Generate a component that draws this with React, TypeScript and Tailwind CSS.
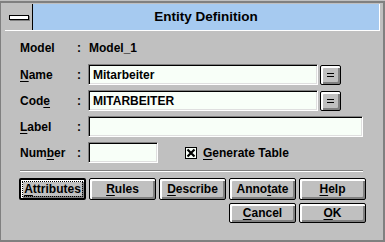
import React from "react";

const btnBase =
  "flex items-center justify-center rounded-[2px] bg-[#c0c0c0] text-[12px] font-bold text-black shadow-[inset_1px_1px_0_#fff,inset_2px_2px_0_#fff,inset_-1px_-1px_0_#808080,inset_-2px_-2px_0_#808080]";

const fieldBox =
  "h-[21px] border border-t-[#808080] border-l-[#808080] border-b-white border-r-white bg-[#f8fff8] shadow-[inset_1px_1px_0_#000,inset_-1px_-1px_0_#dfdfdf] flex items-center pl-[4px] text-[12px] font-bold";

function PushButton({
  label,
  hot,
  isDefault,
  h = "h-[22px]",
}: {
  label: string;
  hot: number;
  isDefault?: boolean;
  h?: string;
}) {
  const before = label.slice(0, hot);
  const key = label[hot];
  const after = label.slice(hot + 1);
  const text = (
    <span>
      {before}
      <u className="underline-offset-[2px]">{key}</u>
      {after}
    </span>
  );
  return (
    <div
      className={`${btnBase} ${h} w-[67px] ${isDefault ? "border-2 border-black" : "border border-black"}`}
    >
      {isDefault ? (
        <span className="border border-dotted border-black px-px leading-[14px]">{text}</span>
      ) : (
        text
      )}
    </div>
  );
}

function EqButton() {
  return (
    <div className={`${btnBase} h-[20px] w-[21px] border border-black`}>
      <svg width="7" height="4" viewBox="0 0 7 4">
        <rect x="0" y="0" width="7" height="1" fill="#000" />
        <rect x="0" y="3" width="7" height="1" fill="#000" />
      </svg>
    </div>
  );
}

function Label({ text, hot }: { text: string; hot?: number }) {
  return (
    <>
      <div className="w-[57px] text-[12px] font-bold">
        {hot === undefined ? (
          text
        ) : (
          <>
            {text.slice(0, hot)}
            <u className="underline-offset-[2px]">{text[hot]}</u>
            {text.slice(hot + 1)}
          </>
        )}
      </div>
      <div className="w-[11px] text-[12px] font-bold">:</div>
    </>
  );
}

export default function App() {
  return (
    <div className="h-[242px] w-[385px] overflow-hidden bg-[#c0c0c0] pt-px font-['Liberation_Sans',Arial,sans-serif] text-black">
      <div className="flex h-[241px] flex-col border-t-2 border-r-2 border-b-2 border-l border-[#808080] pt-px pl-[4px] pr-[3px]">
        {/* title bar */}
        <div className="flex h-[27px] border-b border-r border-white">
          <div className="flex w-[28px] items-center justify-center border-r border-black bg-[#c0c0c0]">
            <div className="h-[5px] w-[20px] border border-black bg-white shadow-[1px_1px_0_#808080]" />
          </div>
          <div className="flex flex-1 items-center justify-center bg-[#a6caf0] text-[13.5px] font-bold">
            Entity Definition
          </div>
        </div>

        <div className="flex flex-col pl-[15px]">
          <div className="mt-[9px] flex h-[16px] items-center">
            <Label text="Model" />
            <div className="pl-px text-[12px] font-bold">Model_1</div>
          </div>

          <div className="mt-[8px] flex h-[21px] items-center">
            <Label text="Name" hot={0} />
            <div className={`${fieldBox} w-[230px]`}>Mitarbeiter</div>
            <div className="ml-[2px]">
              <EqButton />
            </div>
          </div>

          <div className="mt-[5px] flex h-[21px] items-center">
            <Label text="Code" hot={3} />
            <div className={`${fieldBox} w-[230px]`}>MITARBEITER</div>
            <div className="ml-[2px]">
              <EqButton />
            </div>
          </div>

          <div className="mt-[5px] flex h-[21px] items-center">
            <Label text="Label" hot={0} />
            <div className={`${fieldBox} w-[275px]`} />
          </div>

          <div className="mt-[5px] flex h-[21px] items-center">
            <Label text="Number" hot={3} />
            <div className={`${fieldBox} w-[70px]`} />
            <div className="ml-[27px] flex items-center">
              <svg width="12" height="12" viewBox="0 0 12 12">
                <rect x="0.5" y="0.5" width="11" height="11" fill="#f8fff8" stroke="#000" />
                <path d="M2.5 2.5 L9.5 9.5 M9.5 2.5 L2.5 9.5" stroke="#000" strokeWidth="2.2" />
              </svg>
              <span className="ml-[6px] text-[12px] font-bold">
                <u className="underline-offset-[2px]">G</u>enerate Table
              </span>
            </div>
          </div>

          <div className="mt-[7px] h-[2px] w-[343px] border-t border-b border-t-[#808080] border-b-white" />

          <div className="-ml-px mt-[6px] flex w-[347px] gap-[3px]">
            <PushButton label="Attributes" hot={0} isDefault />
            <PushButton label="Rules" hot={0} />
            <PushButton label="Describe" hot={0} />
            <PushButton label="Annotate" hot={4} />
            <PushButton label="Help" hot={0} />
          </div>

          <div className="-ml-px mt-[3px] flex w-[347px] justify-end gap-[3px]">
            <PushButton label="Cancel" hot={0} h="h-[20px]" />
            <PushButton label="OK" hot={0} h="h-[20px]" />
          </div>
        </div>
      </div>
    </div>
  );
}
